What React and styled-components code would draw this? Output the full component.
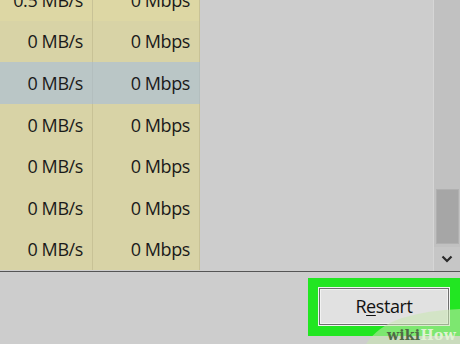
import React from "react";
import styled, { createGlobalStyle } from "styled-components";

const Global = createGlobalStyle`
  html, body { margin: 0; padding: 0; background: #cdcdcd; }
  body { font-family: "Open Sans", "Noto Sans", sans-serif; }
`;

const Screen = styled.div`
  position: relative;
  width: 460px;
  height: 344px;
  overflow: hidden;
  background: #cdcdcd;
  display: flex;
  flex-direction: column;
`;

const Top = styled.div`
  height: 271px;
  display: flex;
  flex-shrink: 0;
`;

const Table = styled.div`
  width: 200px;
  overflow: hidden;
`;

const Rows = styled.div`
  margin-top: -21px;
  display: flex;
  flex-direction: column;
`;

const Row = styled.div`
  height: 41.6px;
  display: grid;
  grid-template-columns: 93px 107px;
  background: ${(p) => (p.$selected ? "#bac6c6" : p.$hot ? "#ddd7a4" : "#d8d3a6")};
`;

const Cell = styled.div`
  display: flex;
  align-items: center;
  justify-content: flex-end;
  padding-right: 9px;
  font-size: 18px;
  letter-spacing: -0.4px;
  color: #1a1a1a;
  border-right: 1px solid ${(p) => (p.$selected ? "#b3bebe" : "#c8c296")};
`;

const Blank = styled.div`
  flex: 1;
  background: #cdcdcd;
  border-right: 1px solid #d6d6d6;
`;

const Scrollbar = styled.div`
  width: 26px;
  background: #c1c1c1;
  display: flex;
  flex-direction: column;
  align-items: center;
`;

const Track = styled.div`
  flex: 1;
  width: 100%;
  display: flex;
  flex-direction: column;
  align-items: center;
  padding-top: 189px;
  box-sizing: border-box;
`;

const Thumb = styled.div`
  width: 23px;
  height: 55px;
  background: #a6a6a6;
  box-shadow: inset 0 0 0 1px #b0b0b0;
`;

const ArrowButton = styled.div`
  height: 24px;
  width: 100%;
  display: flex;
  align-items: center;
  justify-content: center;
  background: #c6c6c6;
`;

const Divider = styled.div`
  height: 1px;
  background: #555555;
  flex-shrink: 0;
`;

const Footer = styled.div`
  flex: 1;
  display: flex;
  justify-content: flex-end;
  align-items: flex-start;
  padding-top: 6px;
`;

const Highlight = styled.div`
  width: 152px;
  height: 58px;
  box-sizing: border-box;
  background: #22e622;
  padding: 10px 11px 11px 11px;
  display: flex;
`;

const Button = styled.button`
  flex: 1;
  margin: 0;
  background: #e1e1e1;
  border: 1px solid #6e6e6e;
  box-shadow: 0 0 0 1px #f2f2f2, inset 0 0 0 1px #f2f2f2;
  font-family: "Open Sans", "Noto Sans", sans-serif;
  font-size: 18px;
  letter-spacing: -0.4px;
  color: #111;
  display: flex;
  align-items: center;
  justify-content: center;
  padding: 0 0 2px 0;
  u { text-underline-offset: 2px; }
`;

const Watermark = styled.div`
  position: absolute;
  right: 0;
  bottom: 0;
  width: 100px;
  height: 38px;
  pointer-events: none;
`;

const WatermarkShape = styled.svg`
  position: absolute;
  left: 0;
  top: 0;
`;

const WatermarkText = styled.div`
  position: absolute;
  right: 4px;
  bottom: 1px;
  font-family: "DejaVu Serif", "Liberation Serif", serif;
  font-weight: bold;
  font-size: 14px;
  letter-spacing: 0.3px;
`;

const Wiki = styled.span`
  color: #4f6a45;
`;

const How = styled.span`
  color: #dff3d2;
`;

const data = [
  ["0.5 MB/s", "0 Mbps"],
  ["0 MB/s", "0 Mbps"],
  ["0 MB/s", "0 Mbps"],
  ["0 MB/s", "0 Mbps"],
  ["0 MB/s", "0 Mbps"],
  ["0 MB/s", "0 Mbps"],
  ["0 MB/s", "0 Mbps"],
];

export default function App() {
  return (
    <>
      <Global />
      <Screen>
        <Top>
          <Table>
            <Rows>
              {data.map((r, i) => (
                <Row key={i} $selected={i === 2} $hot={i === 0}>
                  <Cell $selected={i === 2}>{r[0]}</Cell>
                  <Cell $selected={i === 2}>{r[1]}</Cell>
                </Row>
              ))}
            </Rows>
          </Table>
          <Blank />
          <Scrollbar>
            <Track>
              <Thumb />
            </Track>
            <ArrowButton>
              <svg width="12" height="8" viewBox="0 0 12 8">
                <path d="M1.5 1.5 L6 6 L10.5 1.5" fill="none" stroke="#2a2a2a" strokeWidth="2.2" />
              </svg>
            </ArrowButton>
          </Scrollbar>
        </Top>
        <Divider />
        <Footer>
          <Highlight>
            <Button>
              R<u>e</u>start
            </Button>
          </Highlight>
        </Footer>
        <Watermark>
          <WatermarkShape width="100" height="38" viewBox="0 0 100 38">
            <path d="M6 38 Q 18 20 42 12 Q 68 4 100 3 L100 38 Z" fill="#c8e8b0" fillOpacity="0.55" />
          </WatermarkShape>
          <WatermarkText>
            <Wiki>wiki</Wiki>
            <How>How</How>
          </WatermarkText>
        </Watermark>
      </Screen>
    </>
  );
}
